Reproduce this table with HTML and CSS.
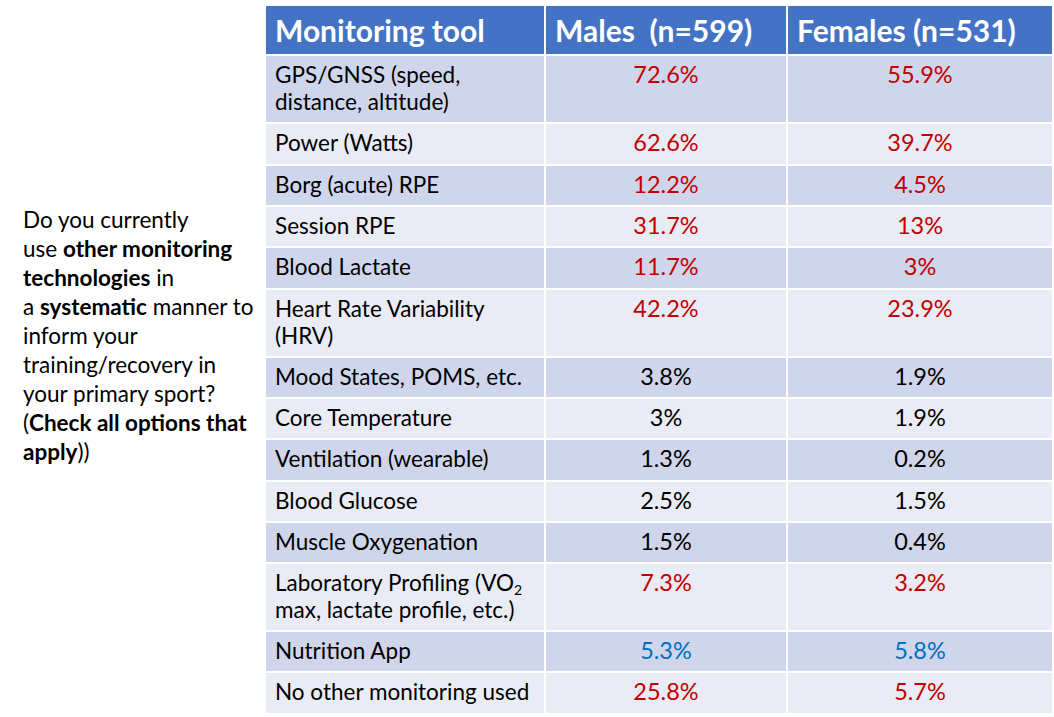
FILE: index.html
```html
<!DOCTYPE html>
<html>
<head>
<meta charset="utf-8">
<link rel="stylesheet" href="styles.css">
</head>
<body>
<div class="slide">
  <div class="question">
    <p>Do you currently<br>use <b>other monitoring</b><br><b>technologies</b> in<br>a <b>systematic</b> manner to<br>inform your<br>training/recovery in<br>your primary sport?<br>(<b>Check all options that</b><br><b>apply</b>))</p>
  </div>
  <div class="table">
    <div class="th">Monitoring tool</div>
    <div class="th">Males  (n=599)</div>
    <div class="th">Females (n=531)</div>

    <div class="td dark">GPS/GNSS (speed,<br>distance, altitude)</div>
    <div class="td dark num red">72.6%</div>
    <div class="td dark num red">55.9%</div>

    <div class="td light">Power (Watts)</div>
    <div class="td light num red">62.6%</div>
    <div class="td light num red">39.7%</div>

    <div class="td dark">Borg (acute) RPE</div>
    <div class="td dark num red">12.2%</div>
    <div class="td dark num red">4.5%</div>

    <div class="td light">Session RPE</div>
    <div class="td light num red">31.7%</div>
    <div class="td light num red">13%</div>

    <div class="td dark">Blood Lactate</div>
    <div class="td dark num red">11.7%</div>
    <div class="td dark num red">3%</div>

    <div class="td light">Heart Rate Variability<br>(HRV)</div>
    <div class="td light num red">42.2%</div>
    <div class="td light num red">23.9%</div>

    <div class="td dark">Mood States, POMS, etc.</div>
    <div class="td dark num">3.8%</div>
    <div class="td dark num">1.9%</div>

    <div class="td light">Core Temperature</div>
    <div class="td light num">3%</div>
    <div class="td light num">1.9%</div>

    <div class="td dark">Ventilation (wearable)</div>
    <div class="td dark num">1.3%</div>
    <div class="td dark num">0.2%</div>

    <div class="td light">Blood Glucose</div>
    <div class="td light num">2.5%</div>
    <div class="td light num">1.5%</div>

    <div class="td dark">Muscle Oxygenation</div>
    <div class="td dark num">1.5%</div>
    <div class="td dark num">0.4%</div>

    <div class="td light">Laboratory Profiling (VO<sub>2</sub><br>max, lactate profile, etc.)</div>
    <div class="td light num red">7.3%</div>
    <div class="td light num red">3.2%</div>

    <div class="td dark">Nutrition App</div>
    <div class="td dark num blue">5.3%</div>
    <div class="td dark num blue">5.8%</div>

    <div class="td light">No other monitoring used</div>
    <div class="td light num red">25.8%</div>
    <div class="td light num red">5.7%</div>
  </div>
</div>
</body>
</html>
```
FILE: styles.css
```css
html, body {
  margin: 0;
  padding: 0;
  background: #ffffff;
}
body {
  width: 1054px;
  height: 717px;
  overflow: hidden;
  font-family: Lato, "Open Sans", sans-serif;
  color: #000000;
}
.slide {
  display: flex;
  align-items: flex-start;
}
.question {
  width: 243px;
  padding-left: 23px;
  padding-top: 205px;
}
.question p {
  margin: 0;
  font-size: 22.5px;
  line-height: 29px;
  color: #000;
}
.question b {
  font-weight: 700;
}
.table {
  margin-top: 6px;
  display: grid;
  grid-template-columns: 278px 240px 264px;
  grid-template-rows: 48px 66px 40px 39px 39px 40px 66px 39px 39px 40px 39px 39px 66px 39px 40px;
  gap: 2px;
  background: #ffffff;
}
.th {
  background: #4472C4;
  color: #ffffff;
  font-weight: 700;
  font-size: 30px;
  line-height: 48px;
  padding-left: 9px;
  white-space: pre;
}
.td {
  font-size: 22.5px;
  line-height: 27px;
  padding: 5px 9px 0 9px;
  white-space: nowrap;
}
.td sub {
  font-size: 14px;
  line-height: 0;
  vertical-align: -4px;
}
.dark {
  background: #CFD5EA;
}
.light {
  background: #E9EBF5;
}
.num {
  text-align: center;
  padding-left: 0;
  padding-right: 0;
  font-size: 23.5px;
}
.red {
  color: #C00000;
}
.blue {
  color: #0070C0;
}
```
